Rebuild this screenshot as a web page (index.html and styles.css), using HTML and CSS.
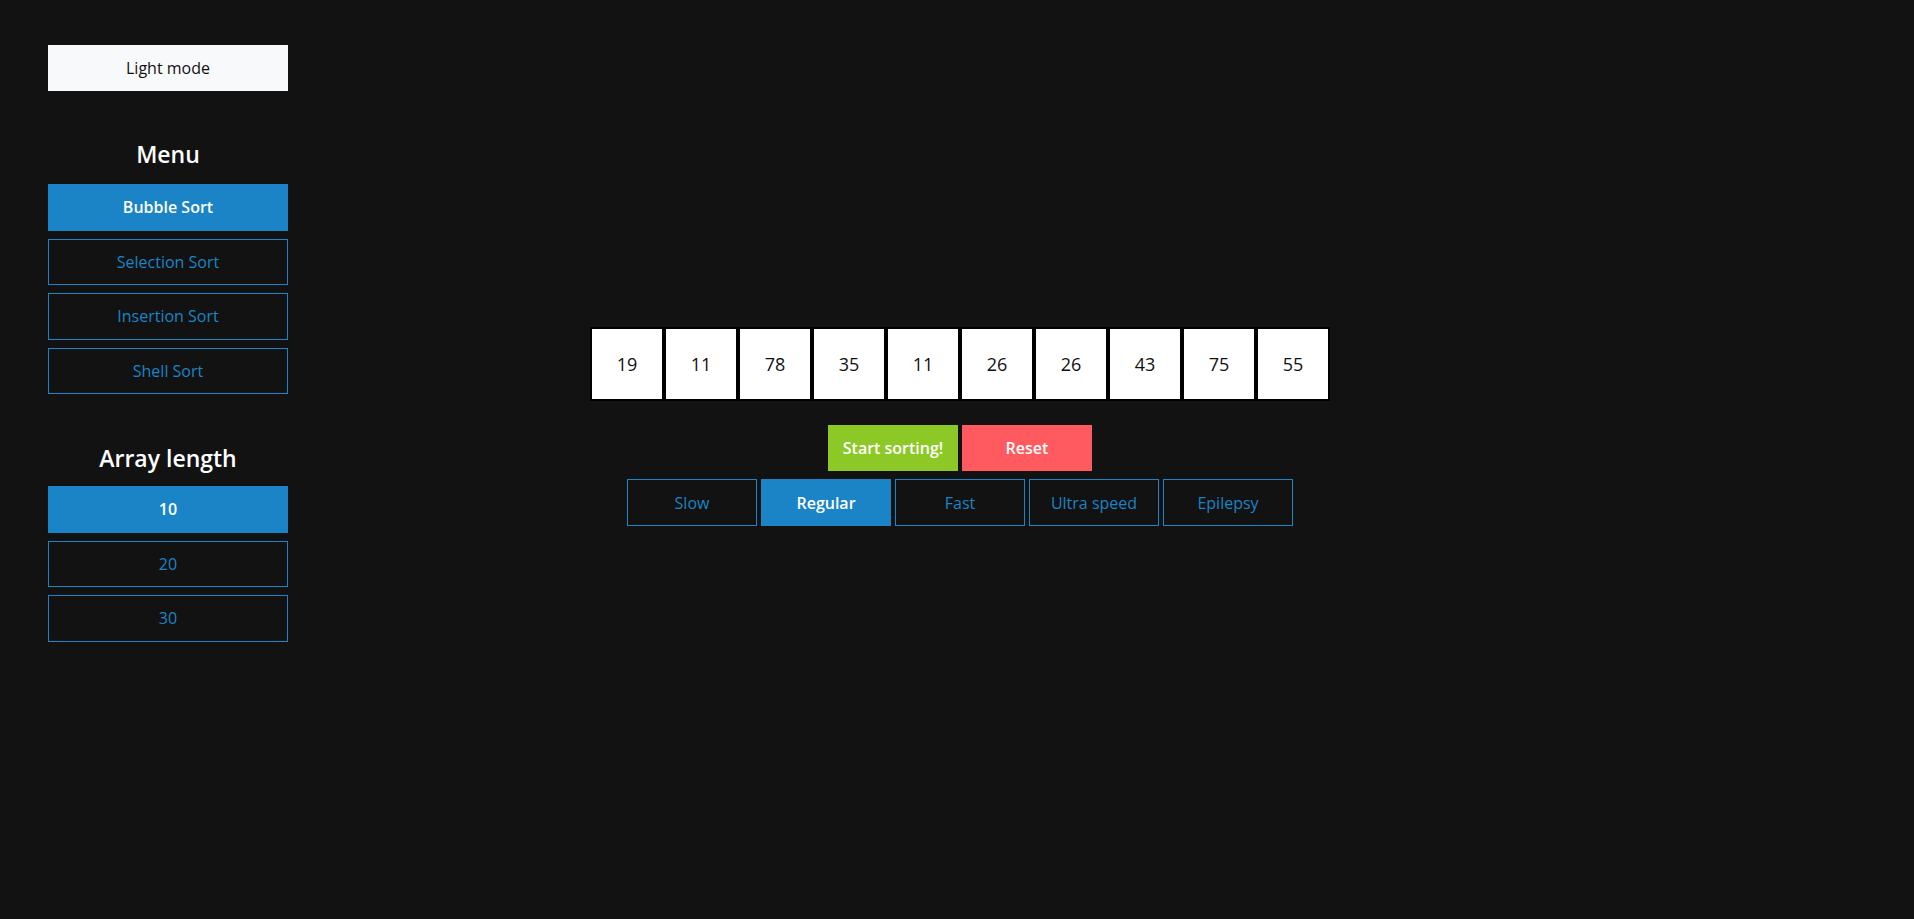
FILE: index.html
```html
<!DOCTYPE html>
<html lang="en">
<head>
<meta charset="utf-8">
<title>Sorting Visualizer</title>
<link rel="stylesheet" href="styles.css">
</head>
<body>
<div class="layout">
  <aside class="sidebar">
    <button class="btn btn-light">Light mode</button>
    <h2 class="heading heading-menu">Menu</h2>
    <div class="btn-list">
      <button class="btn btn-outline active">Bubble Sort</button>
      <button class="btn btn-outline">Selection Sort</button>
      <button class="btn btn-outline">Insertion Sort</button>
      <button class="btn btn-outline">Shell Sort</button>
    </div>
    <h2 class="heading heading-array">Array length</h2>
    <div class="btn-list">
      <button class="btn btn-outline active">10</button>
      <button class="btn btn-outline">20</button>
      <button class="btn btn-outline">30</button>
    </div>
  </aside>
  <main class="main">
    <div class="bars">
      <div class="bar">19</div>
      <div class="bar">11</div>
      <div class="bar">78</div>
      <div class="bar">35</div>
      <div class="bar">11</div>
      <div class="bar">26</div>
      <div class="bar">26</div>
      <div class="bar">43</div>
      <div class="bar">75</div>
      <div class="bar">55</div>
    </div>
    <div class="actions">
      <button class="btn btn-action btn-start">Start sorting!</button>
      <button class="btn btn-action btn-reset">Reset</button>
    </div>
    <div class="speeds">
      <button class="btn btn-outline btn-speed">Slow</button>
      <button class="btn btn-outline btn-speed active">Regular</button>
      <button class="btn btn-outline btn-speed">Fast</button>
      <button class="btn btn-outline btn-speed">Ultra speed</button>
      <button class="btn btn-outline btn-speed">Epilepsy</button>
    </div>
  </main>
  <div class="spacer"></div>
</div>
</body>
</html>
```

FILE: styles.css
```css
* { box-sizing: border-box; }

html, body {
  margin: 0;
  padding: 0;
  background: #121212;
  height: 100%;
}

body {
  font-family: "Open Sans", "Noto Sans", "Liberation Sans", sans-serif;
  font-size: 16px;
  color: #ffffff;
}

.layout {
  display: grid;
  grid-template-columns: 300px 1fr 294px;
  min-height: 919px;
}

.sidebar {
  padding: 45px 0 0 48px;
  width: 288px;
  display: flex;
  flex-direction: column;
}

.btn {
  font-family: inherit;
  font-size: 16px;
  line-height: 22px;
  display: flex;
  align-items: center;
  justify-content: center;
  border: 1px solid transparent;
  border-radius: 0;
  padding: 0;
  cursor: pointer;
  background: none;
}

.btn-light {
  width: 240px;
  height: 46px;
  background: #f8f9fa;
  color: #111111;
  border-color: #f8f9fa;
}

.heading {
  margin: 0;
  text-align: center;
  font-size: 23px;
  line-height: 32px;
  font-weight: 600;
  color: #ffffff;
  width: 240px;
}

.heading-menu {
  margin-top: 47px;
  margin-bottom: 14px;
}

.heading-array {
  margin-top: 48px;
  margin-bottom: 12px;
}

.btn-list {
  display: flex;
  flex-direction: column;
  gap: 8px;
  width: 240px;
}

.btn-outline {
  height: 46.5px;
  width: 240px;
  color: #1b84c6;
  border-color: #1b84c6;
  background: transparent;
  font-weight: 500;
}

.btn-outline.active {
  background: #1b84c6;
  color: #ffffff;
  font-weight: 600;
}

.main {
  display: flex;
  flex-direction: column;
  align-items: center;
  padding-top: 327px;
}

.bars {
  display: flex;
}

.bar {
  width: 74px;
  height: 74px;
  border: 2px solid #000000;
  background: #ffffff;
  color: #111111;
  font-size: 18px;
  display: flex;
  align-items: center;
  justify-content: center;
}

.actions {
  display: flex;
  gap: 4px;
  margin-top: 24px;
}

.btn-action {
  width: 130px;
  height: 46px;
  color: #ffffff;
  font-weight: 600;
}

.btn-start {
  background: #8cc926;
  border-color: #8cc926;
}

.btn-reset {
  background: #ff5a5f;
  border-color: #ff5a5f;
}

.speeds {
  display: flex;
  gap: 4px;
  margin-top: 8px;
}

.btn-speed {
  width: 130px;
  height: 47px;
}
```
